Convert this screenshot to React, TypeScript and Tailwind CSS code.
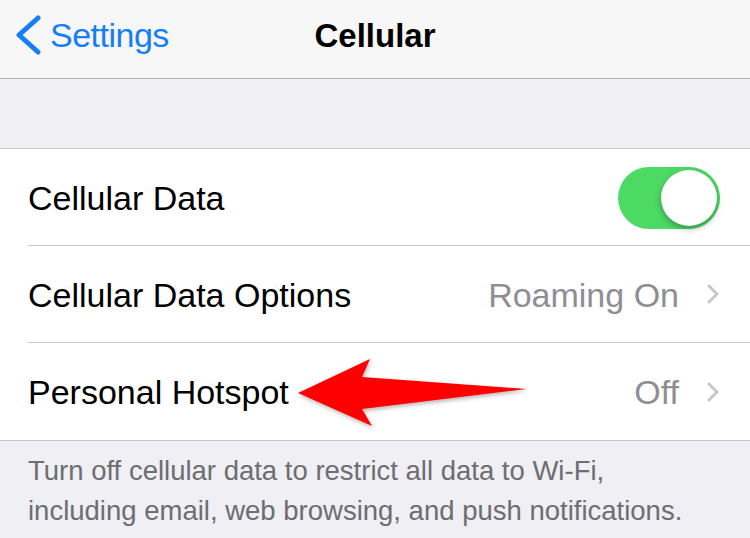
import { ChevronRight } from "lucide-react";

function Row({ label, value, children, last }: { label: string; value?: string; children?: React.ReactNode; last?: boolean }) {
  return (
    <div className="pl-[28px] bg-white">
      <div className={`flex h-[97px] items-center pr-[28px] ${last ? "" : "border-b border-[#c8c7cc]"}`}>
        <span className="flex-1 text-[34px] text-black pt-[2px]">{label}</span>
        {value && <span className="text-[34px] text-[#8e8e93] mr-[18px] pt-[2px]">{value}</span>}
        {value && <ChevronRight size={32} strokeWidth={2.2} className="text-[#c7c7cc] -mr-[7px]" />}
        {children}
      </div>
    </div>
  );
}

export default function App() {
  return (
    <div className="relative w-[750px] h-[538px] bg-[#efeff4] overflow-hidden font-['Liberation_Sans',Arial,sans-serif]">
      <div className="relative flex h-[79px] items-center bg-[#f7f7f7] border-b border-[#b2b2b2] pb-[8px]">
        <div className="flex items-center pl-[14px] text-[#147efb]">
          <svg width="28" height="40" viewBox="0 0 28 40" className="mr-[8px]">
            <polyline points="24,3 5,20 24,37" fill="none" stroke="currentColor" strokeWidth="5" strokeLinecap="round" strokeLinejoin="round" />
          </svg>
          <span className="text-[34px] tracking-[-0.5px]">Settings</span>
        </div>
        <div className="absolute left-0 right-0 top-[11px] text-center text-[33px] font-bold text-black pointer-events-none">Cellular</div>
      </div>
      <div className="h-[69px]" />
      <div className="border-y border-[#c8c7cc]">
        <Row label="Cellular Data">
          <div className="relative w-[102px] h-[62px] rounded-full bg-[#4cd964] mt-[1px] mr-[2px]">
            <div className="absolute right-[3px] top-[3px] w-[56px] h-[56px] rounded-full bg-white shadow-[0_3px_6px_rgba(0,0,0,0.3)]" />
          </div>
        </Row>
        <Row label="Cellular Data Options" value="Roaming On" />
        <Row label="Personal Hotspot" value="Off" last />
      </div>
      <div className="px-[28px] pt-[10px] text-[27.5px] leading-[40px] text-[#6d6d72]">
        Turn off cellular data to restrict all data to Wi-Fi,
        <br />
        including email, web browsing, and push notifications.
      </div>
      <svg className="absolute left-0 top-0" width="750" height="538" viewBox="0 0 750 538">
        <defs>
          <filter id="sh" x="-10%" y="-30%" width="120%" height="160%">
            <feDropShadow dx="1" dy="2" stdDeviation="2" floodColor="#000" floodOpacity="0.3" />
          </filter>
        </defs>
        <path d="M298 393 L370 359 L362 377 L527 389 L362 409 L372 426 Z" fill="#ff0000" filter="url(#sh)" />
      </svg>
    </div>
  );
}
